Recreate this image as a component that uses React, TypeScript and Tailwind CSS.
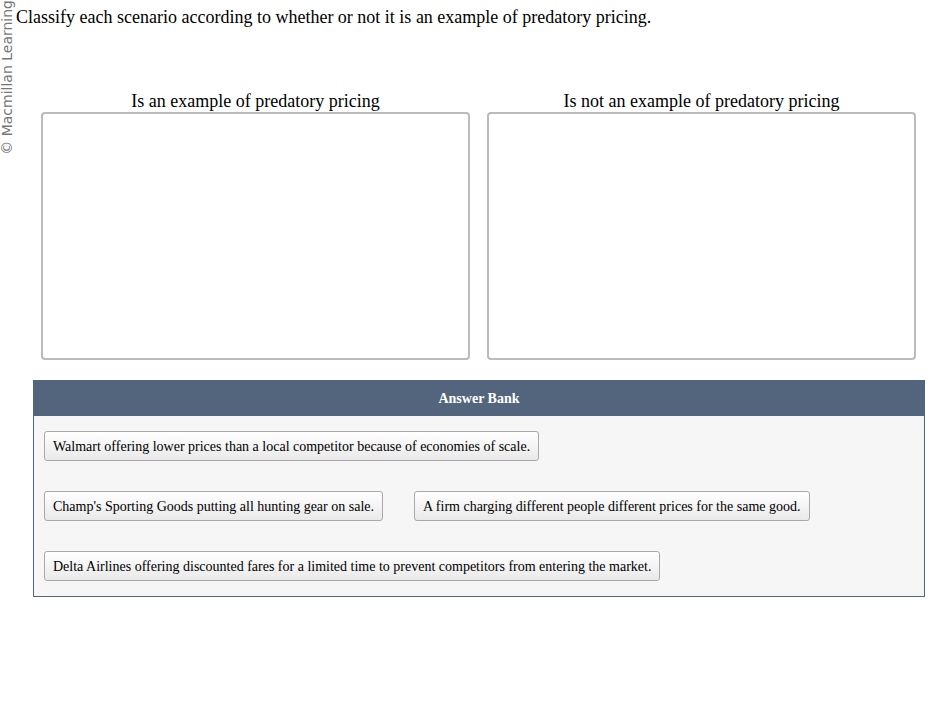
import React from "react";

const serif = { fontFamily: '"Liberation Serif", "Times New Roman", serif' };

function Chip({ text }: { text: string }) {
  return (
    <div className="h-[30px] px-[8px] flex items-center border border-[#a9a9a9] rounded-[3px] bg-gradient-to-b from-white to-[#e9e9e9] text-[14px] text-black whitespace-nowrap">
      {text}
    </div>
  );
}

export default function App() {
  return (
    <div className="relative w-[943px] h-[706px] bg-white text-black" style={serif}>
      <div
        className="absolute left-[-72px] top-[72px] w-[158px] h-[14px] -rotate-90 text-[#777] text-[14px] leading-[14px] text-right whitespace-nowrap"
        style={{ fontFamily: '"DejaVu Sans", Verdana, sans-serif' }}
      >
        © Macmillan Learning
      </div>

      <div className="pl-[16px] pt-[6px] text-[18px] leading-[22px]">
        Classify each scenario according to whether or not it is an example of predatory pricing.
      </div>

      <div className="ml-[41px] mt-[62px] flex gap-[17px]">
        {["Is an example of predatory pricing", "Is not an example of predatory pricing"].map((h) => (
          <div key={h} className="w-[429px] flex flex-col">
            <div className="text-center text-[18px] leading-[22px]">{h}</div>
            <div className="h-[248px] border-2 border-[#bbbbbb] rounded-[4px] bg-white" />
          </div>
        ))}
      </div>

      <div className="ml-[33px] mt-[20px] w-[892px] border border-[#52657c]">
        <div className="h-[35px] bg-[#52657c] flex items-center justify-center text-white font-bold text-[14px]">
          Answer Bank
        </div>
        <div className="bg-[#f6f6f6] pt-[15px] pb-[15px] pl-[10px] flex flex-col gap-[30px]">
          <div className="flex">
            <Chip text="Walmart offering lower prices than a local competitor because of economies of scale." />
          </div>
          <div className="flex gap-[31px]">
            <Chip text="Champ's Sporting Goods putting all hunting gear on sale." />
            <Chip text="A firm charging different people different prices for the same good." />
          </div>
          <div className="flex">
            <Chip text="Delta Airlines offering discounted fares for a limited time to prevent competitors from entering the market." />
          </div>
        </div>
      </div>
    </div>
  );
}
